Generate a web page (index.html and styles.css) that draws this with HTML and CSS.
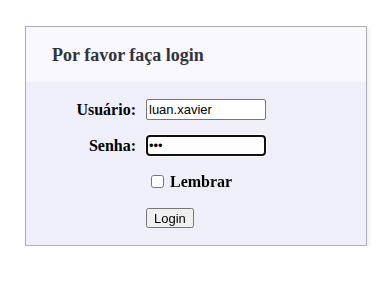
FILE: index.html
```html
<!DOCTYPE html>
<html>
<head>
<meta charset="utf-8">
<link rel="stylesheet" href="styles.css">
</head>
<body>
<div class="card">
  <div class="card-header">Por favor faça login</div>
  <form class="card-body">
    <div class="row">
      <label class="lbl" for="u">Usuário:</label>
      <input id="u" class="field" type="text" value="luan.xavier">
    </div>
    <div class="row">
      <label class="lbl" for="p">Senha:</label>
      <input id="p" class="field" type="password" value="abc" autofocus>
    </div>
    <div class="row">
      <span></span>
      <label class="remember"><input type="checkbox" class="chk"> Lembrar</label>
    </div>
    <div class="row">
      <span></span>
      <div class="btn-cell"><button type="button" class="btn">Login</button></div>
    </div>
  </form>
</div>
</body>
</html>
```

FILE: styles.css
```css
html, body { margin: 0; padding: 0; background: #fff; }
body { padding: 26px 21px 0 25px; font-family: "Liberation Serif", serif; }
.card {
  width: 340px;
  border: 1px solid #aeaeb8;
  box-shadow: 2px 2px 4px rgba(0,0,0,0.08);
  background: #efeff9;
}
.card-header {
  background: #f8f8fe;
  height: 55px;
  box-sizing: border-box;
  padding: 18px 0 0 26px;
  font-weight: bold;
  font-size: 18px;
  color: #333340;
}
.card-body {
  margin: 0;
  padding: 17px 0 17px 0;
  display: grid;
  grid-template-columns: 120px 1fr;
  grid-auto-rows: 21px;
  row-gap: 15px;
}
.row { display: contents; }
.lbl {
  font-weight: bold;
  font-size: 16px;
  color: #000;
  text-align: right;
  padding-right: 10px;
  align-self: center;
}
.field {
  width: 120px;
  height: 21px;
  box-sizing: border-box;
  font-family: "Liberation Sans", Arial, sans-serif;
  font-size: 13px;
  margin: 0;
  border: 1px solid #767676;
  border-radius: 2px;
  padding: 1px 2px;
}
.remember { font-weight: bold; font-size: 16px; display: flex; align-items: center; gap: 6px; }
.chk { margin: 0 0 0 5px; width: 13px; height: 13px; }
.btn-cell { display: flex; align-items: center; }
.btn {
  font-family: "Liberation Sans", Arial, sans-serif;
  font-size: 13px;
  padding: 1px 6px;
  margin: 0;
  height: 20px;
}
```
